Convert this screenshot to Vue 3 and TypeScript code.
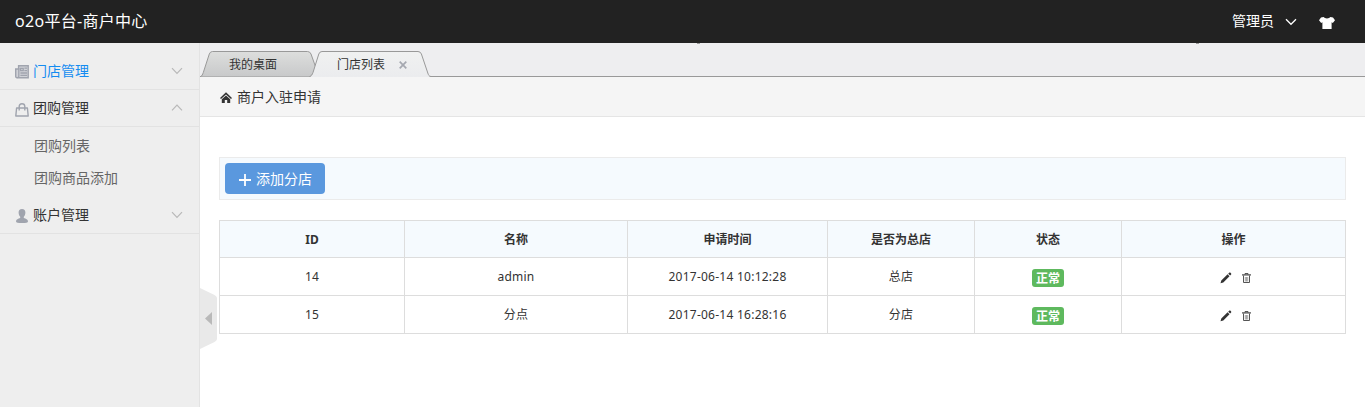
<script setup lang="ts">
interface MenuGroup {
  title: string
  icon: 'news' | 'bag' | 'user'
  open: boolean
  active: boolean
  children: string[]
}

interface Shop {
  id: number
  name: string
  time: string
  kind: string
  status: string
}

const menu: MenuGroup[] = [
  { title: '门店管理', icon: 'news', open: false, active: true, children: [] },
  { title: '团购管理', icon: 'bag', open: true, active: false, children: ['团购列表', '团购商品添加'] },
  { title: '账户管理', icon: 'user', open: false, active: false, children: [] },
]

const columns: string[] = ['ID', '名称', '申请时间', '是否为总店', '状态', '操作']

const shops: Shop[] = [
  { id: 14, name: 'admin', time: '2017-06-14 10:12:28', kind: '总店', status: '正常' },
  { id: 15, name: '分点', time: '2017-06-14 16:28:16', kind: '分店', status: '正常' },
]
</script>

<template>
  <div class="page">
    <header class="topbar">
      <div class="brand">o2o平台-商户中心</div>
      <div class="account">
        <span>管理员</span>
        <svg class="caret" width="12" height="8" viewBox="0 0 12 8"><path d="M1 1.2 6 6.3 11 1.2" fill="none" stroke="#fff" stroke-width="1.3" /></svg>
        <svg class="skin" width="16" height="12" viewBox="0 0 16 12"><path d="M4.6 0C5.8 1.9 10.2 1.9 11.4 0L14 .4 16 3.3 13.8 6 12.6 5.2V12H3.4V5.2L2.2 6 0 3.3 2 .4Z" fill="#fff" /></svg>
      </div>
    </header>

    <div class="body">
      <aside class="sidebar">
        <div v-for="group in menu" :key="group.title" class="group">
          <div class="group-title" :class="{ active: group.active }">
            <svg v-if="group.icon === 'news'" class="icon" width="14" height="14" viewBox="0 0 14 14">
              <path d="M3.6.8h9.6v12H1.8A1.2 1.2 0 0 1 .7 11.6V4h2.9z" fill="#d0d2d7" stroke="#a0a4ae" stroke-width="1.4" />
              <path d="M3.8 3v8.2q0 1.4-1.4 1.4M5.6 3.4h2.6v2.2H5.6zM9.4 3.2h2.6M9.4 5.6h2.6M5.4 8h6.6M5.4 10.4h6.6" fill="none" stroke="#a0a4ae" stroke-width="1.3" />
            </svg>
            <svg v-else-if="group.icon === 'bag'" class="icon bag" width="14" height="14" viewBox="0 0 14 14">
              <path d="M1.6 5h10.8l.8 8H.8zM4.2 7.4V3.5a2.8 2.8 0 0 1 5.6 0v3.9" fill="none" stroke="#a0a4ae" stroke-width="1.4" stroke-linejoin="round" />
            </svg>
            <svg v-else class="icon" width="14" height="14" viewBox="0 0 14 14">
              <path d="M7 0C9.3 0 10.5 1.6 10.4 3.8 10.3 5.7 9.6 7 8.8 7.8V9C10.8 9.8 13 10.2 13 12.4 13 13.4 11 14 7 14S1 13.4 1 12.4C1 10.2 3.2 9.8 5.2 9V7.8C4.4 7 3.7 5.7 3.6 3.8 3.5 1.6 4.7 0 7 0Z" fill="#a0a4ae" />
            </svg>
            <span>{{ group.title }}</span>
            <svg class="chevron" width="12" height="8" viewBox="0 0 12 8"><path :d="group.open ? 'M1 6.3 6 1.2 11 6.3' : 'M1 1.2 6 6.3 11 1.2'" fill="none" stroke="#b8b8b8" stroke-width="1.2" /></svg>
          </div>
          <ul v-if="group.open" class="children">
            <li v-for="child in group.children" :key="child">{{ child }}</li>
          </ul>
        </div>
      </aside>

      <main class="main">
        <svg class="handle" width="17" height="61" viewBox="0 0 17 61">
          <path d="M0 0 14.5 7Q17 8.3 17 10V51Q17 52.7 14.5 54L0 61Z" fill="#e9e9e9" />
          <path d="M12 24V37L5 30.5Z" fill="#b9b9b9" />
        </svg>

        <nav class="tabs">
          <div class="tab first">
            <svg class="shape" width="120" height="26" viewBox="0 0 120 26">
              <defs>
                <linearGradient id="idle" x1="0" y1="0" x2="0" y2="1">
                  <stop offset="0" stop-color="#dddedd" /><stop offset="1" stop-color="#c8c9ca" />
                </linearGradient>
              </defs>
              <path d="M.5 25.5C2 25 2.5 23.5 3.3 21.5L9.3 3Q10.2.5 12.5.5H107.5Q110 .5 111 3L119 25.5Z" fill="url(#idle)" />
              <path d="M.5 25.5C2 25 2.5 23.5 3.3 21.5L9.3 3Q10.2.5 12.5.5H107.5Q110 .5 111 3L119 25.5" fill="none" stroke="#999" />
            </svg>
            <span>我的桌面</span>
          </div>
          <div class="tab current">
            <svg class="shape" width="122" height="26" viewBox="0 0 122 26">
              <defs>
                <linearGradient id="live" x1="0" y1="0" x2="0" y2="1">
                  <stop offset="0" stop-color="#f0f1f1" /><stop offset="1" stop-color="#ebecee" />
                </linearGradient>
              </defs>
              <path d="M1 26C3 25 3.3 23.5 4 21.5L9.8 3Q10.7.5 13 .5H109Q111.4 .5 112.4 3L118.8 22C119.4 23.8 120 25.5 121.5 25.5V26Z" fill="url(#live)" />
              <path d="M.5 25.5C2.5 25 3.2 23.5 4 21.5L9.8 3Q10.7.5 13 .5H109Q111.4 .5 112.4 3L118.8 22C119.4 23.8 120 25.5 122 25.5" fill="none" stroke="#999" />
            </svg>
            <span>门店列表</span>
            <svg class="close" width="8" height="8" viewBox="0 0 8 8"><path d="M.7 .7 7.3 7.3M7.3 .7 .7 7.3" stroke="#a5a8b0" stroke-width="1.7" /></svg>
          </div>
        </nav>

        <div class="crumb">
          <svg width="12" height="11" viewBox="0 0 12 11">
            <path d="M0 6 6 .3 12 6 11 7 6 2.4 1 7Z" fill="#333" />
            <path d="M1.8 7.2 6 3.4 10.2 7.2V11H7.2V8H4.8V11H1.8Z" fill="#333" />
          </svg>
          <span>商户入驻申请</span>
        </div>

        <section class="content">
          <div class="toolbar">
            <button class="add" type="button">
              <svg width="12" height="12" viewBox="0 0 12 12"><path d="M6 0V12M0 6H12" stroke="#fff" stroke-width="1.8" /></svg>
              <span>添加分店</span>
            </button>
          </div>

          <table class="grid">
            <colgroup>
              <col class="c-id" /><col class="c-name" /><col class="c-time" /><col class="c-kind" /><col class="c-status" /><col class="c-ops" />
            </colgroup>
            <thead>
              <tr><th v-for="column in columns" :key="column">{{ column }}</th></tr>
            </thead>
            <tbody>
              <tr v-for="shop in shops" :key="shop.id">
                <td>{{ shop.id }}</td>
                <td>{{ shop.name }}</td>
                <td>{{ shop.time }}</td>
                <td>{{ shop.kind }}</td>
                <td><div class="center"><span class="label">{{ shop.status }}</span></div></td>
                <td>
                  <div class="center ops">
                    <svg width="12" height="12" viewBox="0 0 12 12"><path d="M.5 11.3 1.3 8.4 7.6 2.3 9.5 4.2 3.3 10.4ZM8.2 1.7 9.4.6Q10 .2 10.6.8L11.1 1.4Q11.6 2 11.1 2.6L10.1 3.6Z" fill="#333" /></svg>
                    <svg width="9" height="11" viewBox="0 0 9 11"><path d="M0 1.9H9" stroke="#555" stroke-width="1.3" /><path d="M3 1.8V.5H6V1.8M1.5 2.5V9.5H7.5V2.5" fill="none" stroke="#555" /><path d="M3.3 4V8.5M4.5 4V8.5M5.7 4V8.5" stroke="#666" stroke-width=".6" /></svg>
                  </div>
                </td>
              </tr>
            </tbody>
          </table>
        </section>
      </main>
    </div>
  </div>
</template>

<style>
body {
  margin: 0;
  overflow: hidden;
}
</style>

<style scoped>
.page {
  height: 407px;
  display: flex;
  flex-direction: column;
  font-family: "Noto Sans", "Noto Sans CJK SC", sans-serif;
  font-size: 12px;
  line-height: 18px;
  color: #333;
  background: #fff;
}
svg {
  display: block;
  flex: none;
}
.topbar {
  height: 43px;
  flex: none;
  display: flex;
  justify-content: space-between;
  padding: 0 30px 0 15px;
  background: #222;
  color: #fff;
  line-height: 42px;
}
.brand {
  font-size: 16px;
  letter-spacing: 0.3px;
}
.account {
  display: flex;
  align-items: center;
  font-size: 14px;
}
.account span {
  margin-top: -2px;
}
.caret {
  margin-left: 11px;
}
.skin {
  margin: 3px 0 0 22px;
}
.body {
  flex: 1;
  display: flex;
  min-height: 0;
}
.sidebar {
  box-sizing: border-box;
  width: 200px;
  flex: none;
  padding-top: 10px;
  background: #eee;
  border-right: 1px solid #e3e3e3;
  font-size: 14px;
}
.group-title {
  box-sizing: border-box;
  height: 37px;
  display: flex;
  align-items: center;
  padding: 0 16px 0 15px;
  border-bottom: 1px solid #e2e2e2;
  color: #333;
}
.group-title.active {
  color: #148cf1;
}
.icon {
  margin: 2px 4px 0 0;
}
.bag {
  margin-top: 4px;
}
.chevron {
  margin-left: auto;
}
.children {
  list-style: none;
  margin: 0;
  padding: 3px 0 3px 34px;
  color: #666;
  line-height: 32px;
}
.main {
  position: relative;
  flex: 1;
  min-width: 0;
}
.handle {
  position: absolute;
  left: 0;
  top: 245px;
}
.tabs {
  box-sizing: border-box;
  height: 34px;
  display: flex;
  align-items: flex-end;
  background:
    linear-gradient(#999, #999) 497px 0 / 3px 1px no-repeat,
    linear-gradient(#999, #999) 996px 0 / 3px 1px no-repeat,
    #eeeef0;
  box-shadow: inset 0 -1px #999;
}
.tab {
  position: relative;
  height: 26px;
  line-height: 26px;
  display: flex;
  align-items: center;
  box-sizing: border-box;
}
.tab.first {
  width: 109px;
  padding: 2px 0 0 29px;
}
.tab.current {
  width: 122px;
  padding: 2px 0 0 28px;
}
.tab span,
.close {
  position: relative;
}
.shape {
  position: absolute;
  left: 0;
  top: 0;
}
.close {
  margin: 0 0 0 14px;
}
.crumb {
  box-sizing: border-box;
  height: 40px;
  display: flex;
  align-items: center;
  gap: 5px;
  padding-left: 20px;
  background: #f5f5f5;
  border-bottom: 1px solid #e5e5e5;
  font-size: 14px;
}
.crumb svg {
  margin-top: 2px;
}
.content {
  padding: 40px 19px 0;
}
.toolbar {
  box-sizing: border-box;
  height: 43px;
  padding: 5px;
  background: #f5fafe;
  border: 1px solid #ebebeb;
}
.add {
  width: 100px;
  height: 31px;
  display: flex;
  align-items: center;
  justify-content: center;
  gap: 5px;
  padding: 0 0 0 1px;
  border: 0;
  border-radius: 4px;
  background: #5a98de;
  color: #fff;
  font: 14px/20px "Noto Sans", "Noto Sans CJK SC", sans-serif;
}
.add svg {
  margin-top: 2px;
}
.grid {
  width: 1127px;
  margin-top: 20px;
  table-layout: fixed;
  border-collapse: separate;
  border-spacing: 0;
  border: 0 solid #ddd;
  border-width: 1px 0 0 1px;
}
.c-id { width: 185px; }
.c-name { width: 223px; }
.c-time { width: 200px; }
.c-kind { width: 147px; }
.c-status { width: 147px; }
.c-ops { width: 224px; }
.grid th,
.grid td {
  box-sizing: border-box;
  height: 38px;
  padding: 0;
  text-align: center;
  vertical-align: middle;
  border: 0 solid #ddd;
  border-width: 0 1px 1px 0;
}
.grid td {
  letter-spacing: 0.25px;
}
.grid th {
  height: 37px;
  padding-top: 2px;
  background: #f5fafe;
  font-weight: 700;
}
.center {
  display: flex;
  justify-content: center;
  align-items: center;
  padding-top: 3px;
}
.label {
  width: 32px;
  height: 18px;
  line-height: 19px;
  border-radius: 3px;
  background: #5eb95e;
  color: #fff;
  font-weight: 700;
  letter-spacing: 0;
}
.ops {
  gap: 10px;
  padding-left: 4px;
}
</style>
